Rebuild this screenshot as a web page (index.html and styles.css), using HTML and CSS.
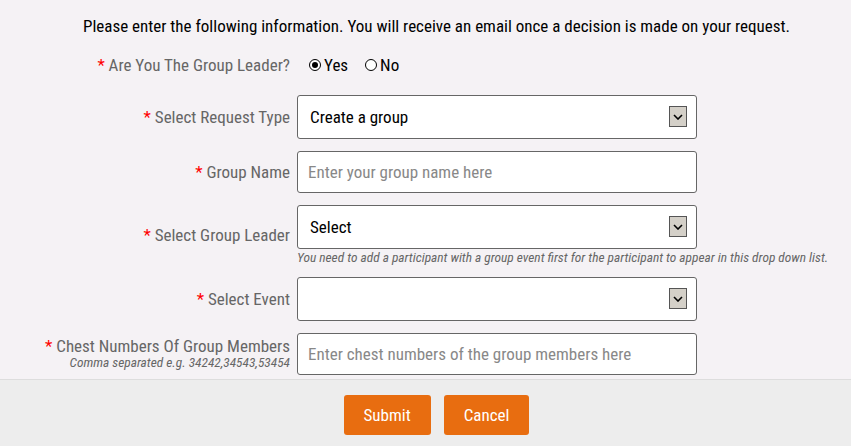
FILE: index.html
```html
<!DOCTYPE html>
<html lang="en">
<head>
  <meta charset="UTF-8">
  <title>Group Request</title>
  <link rel="stylesheet" href="styles.css">
</head>
<body>
  <form class="request-form">
    <div class="form-body">
      <p class="intro">Please enter the following information. You will receive an email once a decision is made on your request.</p>

      <div class="row row-first">
        <label class="label"><span class="req">*</span> Are You The Group Leader?</label>
        <div class="radios">
          <label class="radio"><span class="dot checked"></span>Yes</label>
          <label class="radio"><span class="dot"></span>No</label>
        </div>
      </div>

      <div class="row">
        <label class="label" for="type"><span class="req">*</span> Select Request Type</label>
        <div class="select-wrap">
          <select id="type" class="field">
            <option>Create a group</option>
          </select>
          <span class="arrow"><svg width="10" height="6" viewBox="0 0 10 6"><path d="M1 1l4 4 4-4" fill="none" stroke="#000" stroke-width="1.6"/></svg></span>
        </div>
      </div>

      <div class="row">
        <label class="label" for="gname"><span class="req">*</span> Group Name</label>
        <input id="gname" class="field" type="text" placeholder="Enter your group name here">
      </div>

      <div class="row">
        <label class="label" for="leader"><span class="req">*</span> Select Group Leader</label>
        <div>
          <div class="select-wrap">
            <select id="leader" class="field">
              <option>Select</option>
            </select>
            <span class="arrow"><svg width="10" height="6" viewBox="0 0 10 6"><path d="M1 1l4 4 4-4" fill="none" stroke="#000" stroke-width="1.6"/></svg></span>
          </div>
          <div class="help">You need to add a participant with a group event first for the participant to appear in this drop down list.</div>
        </div>
      </div>

      <div class="row">
        <label class="label" for="event"><span class="req">*</span> Select Event</label>
        <div class="select-wrap">
          <select id="event" class="field">
            <option></option>
          </select>
          <span class="arrow"><svg width="10" height="6" viewBox="0 0 10 6"><path d="M1 1l4 4 4-4" fill="none" stroke="#000" stroke-width="1.6"/></svg></span>
        </div>
      </div>

      <div class="row">
        <label class="label" for="chest"><span class="req">*</span> Chest Numbers Of Group Members<small>Comma separated e.g. 34242,34543,53454</small></label>
        <input id="chest" class="field" type="text" placeholder="Enter chest numbers of the group members here">
      </div>
    </div>

    <div class="footer">
      <button type="submit" class="btn">Submit</button>
      <button type="button" class="btn">Cancel</button>
    </div>
  </form>
</body>
</html>
```

FILE: styles.css
```css
body {
  margin: 0;
  font-family: "Roboto Condensed", Roboto, "Liberation Sans", sans-serif;
  font-stretch: 87.5%;
  background: #f5f2f5;
  color: #000;
}
.form-body {
  padding: 16px 0 4px;
}
.intro {
  margin: 0 0 15px;
  padding-left: 22px;
  text-align: center;
  font-size: 17px;
  line-height: 20px;
}
.row {
  display: grid;
  grid-template-columns: 290px 400px;
  column-gap: 7px;
  align-items: center;
  margin-bottom: 12px;
}
.row-first {
  margin-bottom: 16px;
}
.row:last-child {
  margin-bottom: 0;
}
.label {
  text-align: right;
  color: #666;
  font-size: 17px;
  line-height: 18px;
}
.label small {
  display: block;
  font-size: 13.4px;
  font-style: italic;
  line-height: 16px;
}
.req {
  color: #f00;
}
.radios {
  display: flex;
  gap: 17px;
  padding-left: 12px;
  height: 28px;
  align-items: center;
}
.radio {
  display: flex;
  align-items: center;
  gap: 3px;
  font-size: 17px;
}
.dot {
  width: 12px;
  height: 12px;
  border: 1px solid #000;
  border-radius: 50%;
  box-sizing: border-box;
  background: #fff;
  position: relative;
}
.dot.checked::after {
  content: "";
  position: absolute;
  left: 2px;
  top: 2px;
  width: 6px;
  height: 6px;
  border-radius: 50%;
  background: #000;
}
.field {
  display: block;
  width: 400px;
  height: 44px;
  box-sizing: border-box;
  border: 1px solid #666;
  border-radius: 3px;
  background: #fff;
  padding: 0 12px;
  font-family: inherit;
  font-stretch: inherit;
  font-size: 17px;
  color: #000;
  appearance: none;
  outline: none;
}
input.field {
  height: 42px;
  padding: 0 10px;
}
.field::placeholder {
  color: #888;
}
.select-wrap {
  position: relative;
  width: 400px;
}
.arrow {
  position: absolute;
  right: 10px;
  top: 11px;
  width: 18px;
  height: 21px;
  box-sizing: border-box;
  border: 1px solid #555;
  background: #d4d0c8;
  display: flex;
  align-items: center;
  justify-content: center;
  pointer-events: none;
}
.help {
  margin-top: 2px;
  font-size: 13.4px;
  font-style: italic;
  color: #666;
  white-space: nowrap;
  line-height: 14px;
}
.footer {
  border-top: 1px solid #ddd;
  background: #ededed;
  height: 67px;
  display: flex;
  justify-content: center;
  align-items: flex-start;
  gap: 13px;
  padding: 15px 0 0 22px;
  box-sizing: border-box;
}
.btn {
  background: #e86d10;
  color: #fff;
  border: none;
  border-radius: 3px;
  font-family: inherit;
  font-stretch: inherit;
  font-size: 17px;
  height: 40px;
  padding: 0 20px;
  cursor: pointer;
}
```
